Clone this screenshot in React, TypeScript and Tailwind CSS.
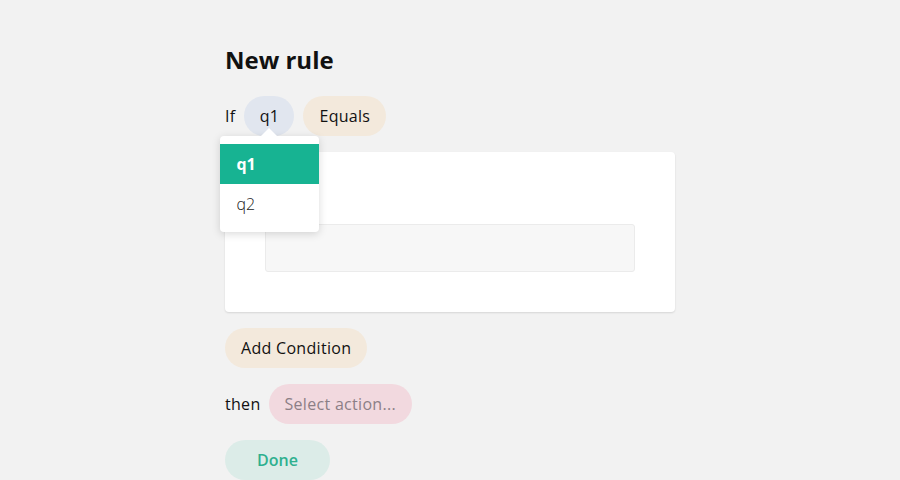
import React from 'react';

const App: React.FC = () => {
  return (
    <div
      className="min-h-[480px] bg-[#f2f2f2] text-[#111]"
      style={{ fontFamily: '"Open Sans", "Noto Sans", sans-serif' }}
    >
      <div className="w-[450px] mx-auto pt-[44px] flex flex-col">
        <h1 className="text-[24px] leading-8 font-bold">New rule</h1>

        <div className="mt-5 flex items-center gap-[9px] h-10 relative z-10 tracking-[0.3px]">
          <span className="text-base">If</span>
          <div className="relative">
            <div className="h-10 w-[50px] rounded-full bg-[#e1e6ef] flex items-center justify-center text-base">
              q1
            </div>
            {/* dropdown */}
            <div className="absolute left-[-24px] top-full w-[99px] bg-white rounded-[4px] shadow-[0_2px_8px_rgba(0,0,0,0.15)] py-2 tracking-normal">
              <div className="absolute left-[41px] top-[-8px] w-0 h-0 border-l-[8px] border-r-[8px] border-b-[8px] border-l-transparent border-r-transparent border-b-white" />
              <div className="h-10 px-4 flex items-center bg-[#17b392] text-white font-bold text-base">q1</div>
              <div className="h-10 px-4 flex items-center text-[#222] font-light text-base">q2</div>
            </div>
          </div>
          <div className="h-10 px-4 rounded-full bg-[#f3e9dc] flex items-center text-base">Equals</div>
        </div>

        <div className="mt-4 bg-white rounded-[4px] shadow-[0_1px_2px_rgba(0,0,0,0.12)] px-10 pt-[72px] pb-10">
          <div className="h-12 bg-[#f7f7f7] border border-[#ebebeb] rounded-[3px]" />
        </div>

        <div className="mt-4 flex tracking-[0.3px]">
          <div className="h-10 px-4 rounded-full bg-[#f3e9dc] flex items-center text-base">
            Add Condition
          </div>
        </div>

        <div className="mt-4 flex items-center gap-2 tracking-[0.3px]">
          <span className="text-base">then</span>
          <div className="h-10 px-4 rounded-full bg-[#f2d9df] flex items-center text-base text-[#8c7f86]">
            Select action...
          </div>
        </div>

        <div className="mt-4 flex">
          <div className="h-10 w-[105px] rounded-full bg-[#dcece8] flex items-center justify-center text-base font-semibold text-[#2fb08f]">
            Done
          </div>
        </div>
      </div>
    </div>
  );
};

export default App;
